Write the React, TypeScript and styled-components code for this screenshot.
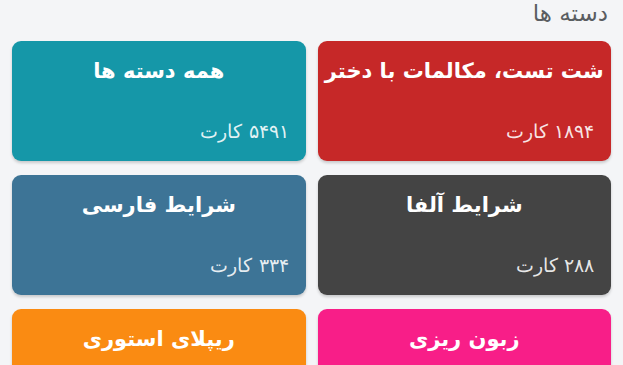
import React from "react";
import styled, { createGlobalStyle } from "styled-components";

const GlobalStyle = createGlobalStyle`
  html, body {
    margin: 0;
    padding: 0;
    background: #f4f5f7;
  }
  body {
    font-family: "DejaVu Sans", "Noto Sans", sans-serif;
    overflow: hidden;
  }
`;

const Page = styled.div`
  direction: rtl;
  width: 623px;
  height: 365px;
  overflow: hidden;
  background: #f4f5f7;
`;

const Header = styled.div`
  height: 41px;
  padding: 0 15px 0 16px;
  box-sizing: border-box;
  font-size: 23px;
  line-height: 27px;
  color: #5a5d61;
`;

const Grid = styled.div`
  display: grid;
  grid-template-columns: 1fr 1fr;
  column-gap: 12px;
  row-gap: 14px;
  padding: 0 12px;
`;

const Card = styled.div<{ $bg: string }>`
  height: 120px;
  border-radius: 9px;
  background: ${(p) => p.$bg};
  box-shadow: 0 2px 3px rgba(0, 0, 0, 0.18);
  display: flex;
  flex-direction: column;
  justify-content: space-between;
  overflow: hidden;
  color: #ffffff;
`;

const Title = styled.div`
  padding-top: 17px;
  font-size: 21px;
  line-height: 26px;
  font-weight: bold;
  text-align: center;
  white-space: nowrap;
  display: flex;
  justify-content: center;
`;

const Count = styled.div`
  padding: 0 17px 18px 17px;
  font-size: 19px;
  line-height: 24px;
  font-weight: 200;
  color: rgba(255, 255, 255, 0.88);
  text-align: right;
`;

const categories = [
  { title: "شت تست، مکالمات با دختر", count: "۱۸۹۴", bg: "#c62828" },
  { title: "همه دسته ها", count: "۵۴۹۱", bg: "#1597a8" },
  { title: "شرایط آلفا", count: "۲۸۸", bg: "#444444" },
  { title: "شرایط فارسی", count: "۳۳۴", bg: "#3d7496" },
  { title: "زبون ریزی", count: "۱۲۰", bg: "#f81e88" },
  { title: "ریپلای استوری", count: "۹۸", bg: "#fa8b12" },
];

export default function App() {
  return (
    <Page>
      <GlobalStyle />
      <Header>دسته ها</Header>
      <Grid>
        {categories.map((c) => (
          <Card key={c.title} $bg={c.bg}>
            <Title>{c.title}</Title>
            <Count>{c.count} کارت</Count>
          </Card>
        ))}
      </Grid>
    </Page>
  );
}
